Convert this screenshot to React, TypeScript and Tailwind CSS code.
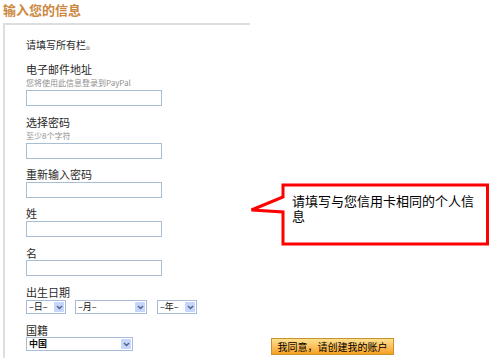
import React from 'react';

const font = { fontFamily: '"Noto Sans CJK SC", "Noto Sans", sans-serif' };

interface FieldProps {
  label: string;
  hint?: string;
  hintSize?: string;
  labelMt: string;
  inputMt: string;
}

const Field: React.FC<FieldProps> = ({ label, hint, hintSize, labelMt, inputMt }) => (
  <>
    <div className={`${labelMt} h-[14px] text-[11px] leading-[14px] text-[#2a2a2a]`}>{label}</div>
    {hint && (
      <div className={`mt-[2px] h-[10px] leading-[10px] text-[#8f8f8f] ${hintSize}`}>{hint}</div>
    )}
    <div className={`${inputMt} h-[16px] w-[136px] border border-[#a9bdd3] bg-white`} />
  </>
);

const Chevron = () => (
  <svg width="7" height="5" viewBox="0 0 7 5">
    <path d="M1 1 L3.5 3.5 L6 1" fill="none" stroke="#4d6185" strokeWidth="1.4" />
  </svg>
);

const Select: React.FC<{ width: string; text: string; bold?: boolean }> = ({ width, text, bold }) => (
  <div className={`flex h-[14px] border border-[#a8bcd8] bg-white ${width}`}>
    <span className={`flex-1 pl-[2px] text-[9px] leading-[12px] text-[#111] ${bold ? 'font-bold' : ''}`}>
      {text}
    </span>
    <span className="m-[1px] flex w-[10px] items-center justify-center rounded-[1px] bg-[#c5d5fb]">
      <Chevron />
    </span>
  </div>
);

export default function App() {
  return (
    <div className="flex h-[363px] w-[490px] overflow-hidden bg-white" style={font}>
      {/* Form column */}
      <div className="ml-[3px] flex w-[247px] flex-col">
        <div className="h-[23px] pt-[2px] text-[13px] font-bold leading-[16px] text-[#cc883e]">
          输入您的信息
        </div>
        <div className="flex h-[335px] flex-col border-l-2 border-t-2 border-[#dedede] pl-[21px]">
          <div className="mt-[13px] h-[14px] text-[10px] leading-[14px] text-[#2a2a2a]">请填写所有栏。</div>
          <Field
            label="电子邮件地址"
            hint="您将使用此信息登录到PayPal"
            hintSize="text-[8px]"
            labelMt="mt-[10px]"
            inputMt="mt-[2px]"
          />
          <Field
            label="选择密码"
            hint="至少8个字符"
            hintSize="text-[8px]"
            labelMt="mt-[9px]"
            inputMt="mt-[2px]"
          />
          <Field label="重新输入密码" labelMt="mt-[8px]" inputMt="mt-[1px]" />
          <Field label="姓" labelMt="mt-[8px]" inputMt="mt-[1px]" />
          <Field label="名" labelMt="mt-[9px]" inputMt="mt-0" />

          <div className="mt-[9px] h-[14px] text-[11px] leading-[14px] text-[#2a2a2a]">出生日期</div>
          <div className="mt-[1px] flex">
            <Select width="w-[40px]" text="–日–" />
            <div className="ml-[9px]">
              <Select width="w-[72px]" text="–月–" />
            </div>
            <div className="ml-[10px]">
              <Select width="w-[40px]" text="–年–" />
            </div>
          </div>

          <div className="mt-[9px] h-[14px] text-[11px] leading-[14px] text-[#2a2a2a]">国籍</div>
          <div className="mt-0">
            <Select width="w-[107px]" text="中国" bold />
          </div>
        </div>
      </div>

      {/* Right column */}
      <div className="flex flex-1 flex-col">
        <div className="relative mt-[183px] h-[63px] w-[240px]">
          <svg width="240" height="63" viewBox="0 0 240 63" className="block">
            <path
              d="M33 14 L33 2 L237.5 2 L237.5 61 L33 61 L33 29 L1.5 27 Z"
              fill="white"
              stroke="#ff0000"
              strokeWidth="3"
            />
          </svg>
          <div className="absolute left-[42px] top-[10px] w-[190px] text-[13px] leading-[15px] text-black">
            请填写与您信用卡相同的个人信息
          </div>
        </div>
        <div className="ml-[21px] mt-[92px] flex h-[17px] w-[123px] items-center justify-center border border-[#c9922f] bg-gradient-to-b from-[#ffe08c] to-[#f6a11a] text-[10px] leading-[15px] text-black">
          我同意，请创建我的账户
        </div>
      </div>
    </div>
  );
}
